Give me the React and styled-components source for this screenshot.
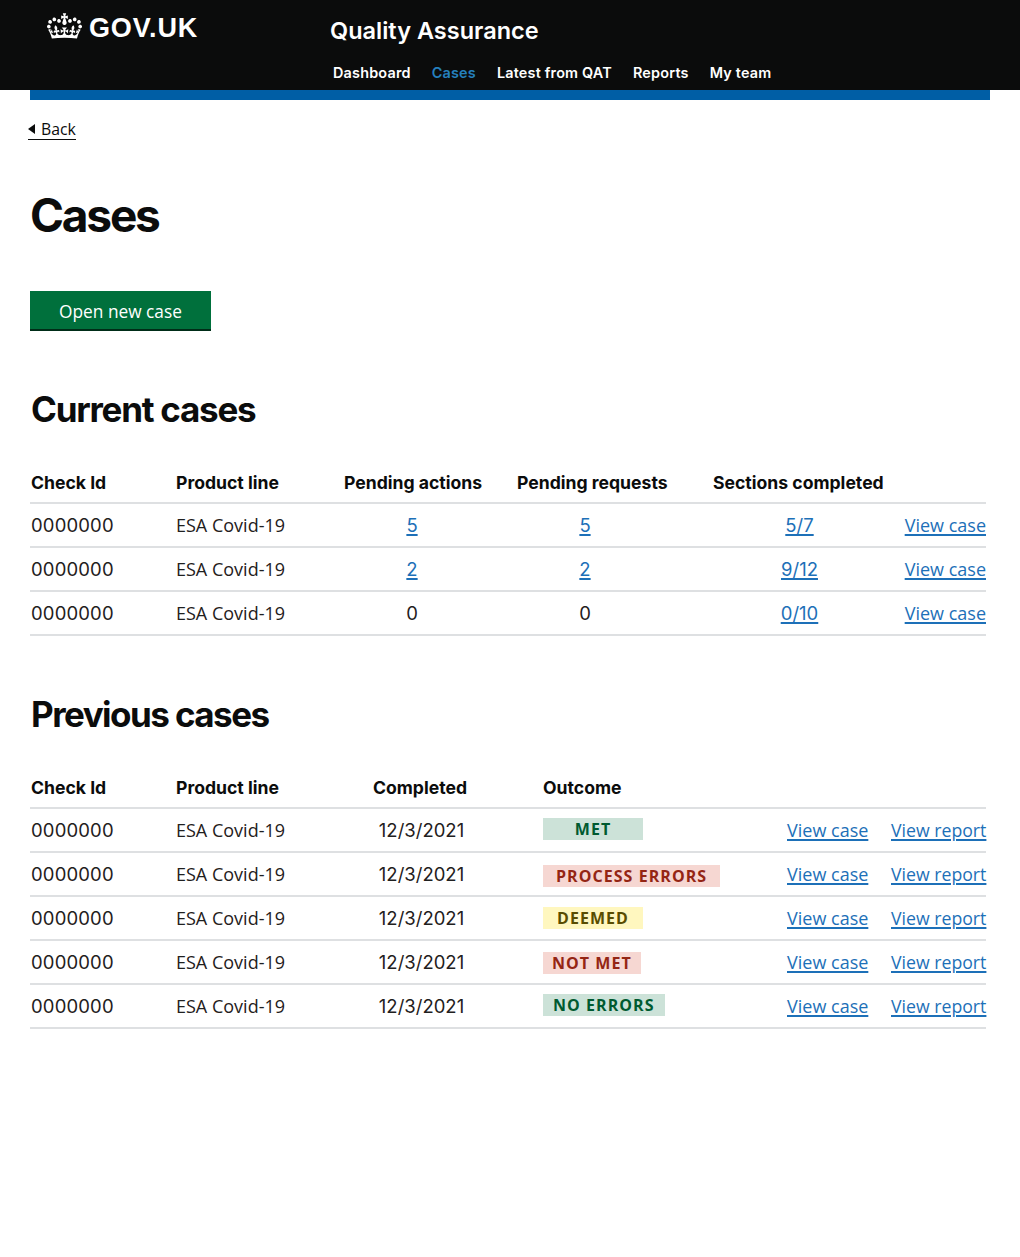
import React from "react";
import styled, { createGlobalStyle } from "styled-components";

const Global = createGlobalStyle`
  html, body { margin: 0; padding: 0; background: #fff; }
  body { font-family: Inter, "Noto Sans", sans-serif; color: #0b0c0c; }
  * { box-sizing: border-box; }
`;
const Page = styled.div`
  width: 1020px;
  min-height: 1257px;
  display: flex;
  flex-direction: column;
`;
const Header = styled.header`
  height: 90px;
  background: #0b0c0c;
  display: flex;
  padding-left: 47px;
`;
const LogoLink = styled.a`
  width: 283px;
  height: 40px;
  margin-top: 13px;
  display: flex;
  align-items: flex-start;
  gap: 7px;
  color: #fff;
`;
const LogoText = styled.span`
  font: 700 27px/30px "Liberation Sans", Arial, sans-serif;
  letter-spacing: 0.85px;
`;
const ServiceBlock = styled.div`
  display: flex;
  flex-direction: column;
`;
const ServiceName = styled.div`
  color: #fff;
  font-weight: 600;
  font-size: 23.5px;
  line-height: 30px;
  margin-top: 16px;
`;
const Nav = styled.nav`
  display: flex;
  gap: 21px;
  margin-top: 16px;
  padding-left: 3px;
`;
const NavLink = styled.a`
  color: ${(p) => (p.$active ? "#2580bd" : "#fff")};
  font-weight: 600;
  font-size: 14.4px;
  letter-spacing: 0.2px;
  line-height: 22px;
  white-space: nowrap;
`;
const BlueBar = styled.div`
  height: 10px;
  margin: 0 30px;
  background: #005ea5;
`;
const Main = styled.main`
  padding: 0 30px;
`;
const BackLink = styled.a`
  display: inline-flex;
  align-items: center;
  gap: 6px;
  margin: 19px 0 0 -2px;
  height: 21px;
  padding-bottom: 1px;
  font: 400 15.8px/20px "Open Sans", sans-serif;
  color: #0b0c0c;
  border-bottom: 1px solid #0b0c0c;
`;
const Caret = styled.span`
  width: 0;
  height: 0;
  border-style: solid;
  border-width: 5px 7px 5px 0;
  border-color: transparent #0b0c0c transparent transparent;
`;
const Title = styled.h1`
  margin: 48px 0 0;
  font-size: 46px;
  line-height: 54px;
  font-weight: 700;
  letter-spacing: -2.2px;
`;
const GreenButton = styled.button`
  display: block;
  margin-top: 49px;
  width: 181px;
  height: 40px;
  border: 0;
  border-radius: 0;
  padding: 2px 0 0;
  background: #00703c;
  box-shadow: inset 0 -2px 0 #002d18;
  color: #fff;
  font: 400 17.3px/24px "Open Sans", sans-serif;
`;
const SectionTitle = styled.h2`
  margin: 57px 0 0;
  font-size: 35px;
  line-height: 42px;
  font-weight: 700;
  letter-spacing: ${(p) => p.$ls}px;
  padding-left: 1px;
`;
const Table = styled.table`
  width: 956px;
  margin-top: 33px;
  border-collapse: collapse;
  table-layout: fixed;
`;
const Col = styled.col`
  width: ${(p) => p.$w}px;
`;
const Th = styled.th`
  height: 40px;
  padding: 0;
  padding-left: ${(p) => (p.$first ? 1 : 0)}px;
  text-align: left;
  font-size: 17.6px;
  font-weight: 700;
  white-space: nowrap;
  border-bottom: 2px solid #dee0e2;
  vertical-align: middle;
`;
const Td = styled.td`
  height: 44px;
  padding: 0 ${(p) => p.$pr || 0}px 0 0;
  font-size: 18.5px;
  font-weight: 400;
  color: #1f2020;
  border-bottom: 2px solid #dee0e2;
  text-align: ${(p) => p.$align || "left"};
  vertical-align: middle;
  white-space: nowrap;
`;
const IdCell = styled(Td)`
  padding-left: 1px;
  letter-spacing: 0.15px;
`;
const ProductCell = styled(Td)`
  font-family: "Open Sans", sans-serif;
  font-size: 18px;
`;
const Link = styled.a`
  color: #1d70b8;
  text-decoration: underline;
  text-decoration-thickness: 2px;
  text-underline-offset: 2px;
`;
const ViewLink = styled(Link)`
  font-family: "Open Sans", sans-serif;
  font-size: ${(p) => p.$size || 18}px;
  vertical-align: 1px;
`;
const Tag = styled.span`
  display: inline-block;
  min-width: ${(p) => p.$min || 0}px;
  height: 22px;
  padding: 0 ${(p) => p.$px}px;
  text-align: center;
  font: 700 16px/22px "Open Sans", "Noto Sans", sans-serif;
  letter-spacing: 1.05px;
  background: ${(p) => p.$bg};
  color: ${(p) => p.$fg};
  position: relative;
  top: ${(p) => p.$dy || 0}px;
`;

const tones = {
  green: { bg: "#cce2d8", fg: "#005a30" },
  red: { bg: "#f6d7d2", fg: "#942514" },
  yellow: { bg: "#fff7bf", fg: "#594d00" },
};

const current = [
  ["5", "5", "5/7"],
  ["2", "2", "9/12"],
  ["0", "0", "0/10"],
];
const previous = [
  { label: "MET", tone: "green", min: 100, px: 8, dy: -2 },
  { label: "PROCESS ERRORS", tone: "red", px: 13, dy: 1 },
  { label: "DEEMED", tone: "yellow", min: 100, px: 8, dy: -1 },
  { label: "NOT MET", tone: "red", px: 9, dy: 0 },
  { label: "NO ERRORS", tone: "green", px: 10, dy: -2 },
];

const Count = ({ v }) => (v === "0" ? v : <Link>{v}</Link>);

function Crown() {
  return (
    <svg width="35" height="26" viewBox="0 0 132 97" fill="#fff" aria-hidden="true">
      <path d="M25 30.2c3.5 1.5 7.7-.2 9.1-3.7 1.5-3.6-.2-7.8-3.9-9.2-3.6-1.4-7.6.3-9.1 3.9-1.4 3.5.3 7.5 3.9 9zM9 39.5c3.6 1.5 7.8-.2 9.2-3.7 1.5-3.6-.2-7.8-3.9-9.1-3.6-1.5-7.6.2-9.1 3.8-1.4 3.5.3 7.5 3.8 9zM4.4 57.2c3.5 1.5 7.7-.2 9.1-3.8 1.5-3.6-.2-7.7-3.9-9.1-3.5-1.5-7.6.3-9.1 3.8-1.4 3.5.3 7.6 3.9 9.1zm38.3-21.4c3.5 1.5 7.7-.2 9.1-3.8 1.5-3.6-.2-7.7-3.9-9.1-3.6-1.5-7.6.3-9.1 3.8-1.3 3.6.4 7.7 3.9 9.1zm64.4-5.6c-3.6 1.5-7.8-.2-9.1-3.7-1.5-3.6.2-7.8 3.8-9.2 3.6-1.4 7.7.3 9.2 3.9 1.3 3.5-.4 7.5-3.9 9zm15.9 9.3c-3.6 1.5-7.7-.2-9.1-3.7-1.5-3.6.2-7.8 3.7-9.1 3.6-1.5 7.7.2 9.2 3.8 1.5 3.5-.3 7.5-3.8 9zm4.7 17.7c-3.6 1.5-7.8-.2-9.2-3.8-1.5-3.6.2-7.7 3.9-9.1 3.6-1.5 7.7.3 9.2 3.8 1.3 3.5-.4 7.6-3.9 9.1zM89.3 35.8c-3.6 1.5-7.8-.2-9.2-3.8-1.4-3.6.2-7.7 3.9-9.1 3.6-1.5 7.7.3 9.2 3.8 1.4 3.6-.3 7.7-3.9 9.1zM69.7 17.7l8.9 4.7V9.3l-8.9 2.8c-.2-.3-.5-.6-.9-.9L72.4 0H59.6l3.5 11.2c-.3.3-.6.5-.9.9l-8.8-2.8v13.1l8.8-4.7c.3.3.6.7.9.9l-5 15.4v.1c-.2.8-.4 1.6-.4 2.4 0 4.1 3.1 7.5 7 8.1h.2c.3 0 .7.1 1 .1.4 0 .7 0 1-.1h.2c4-.6 7.1-4.1 7.1-8.1 0-.8-.1-1.7-.4-2.4V34l-5.1-15.4c.4-.2.7-.6 1-.9zM66 92.8c16.9 0 32.8 1.1 47.1 3.2 4-16.9 8.9-26.7 14-33.5l-9.6-3.4c1 4.9 1.1 7.2 0 10.2-1.5-1.4-3-4.3-4.2-8.7L108.6 76c2.8-2 5-3.2 7.5-3.3-4.4 9.4-10 11.9-13.6 11.2-4.3-.8-6.3-4.6-5.6-7.9 1-4.7 5.7-5.9 8-.5 4.3-8.7-3-11.4-7.6-8.8 7.1-7.2 7.9-13.5 2.1-21.1-8 6.1-8.1 12.3-4.5 20.8-4.7-5.4-12.1-2.5-9.5 6.2 3.4-5.2 7.9-2 7.2 3.1-.6 4.3-6.4 7.8-13.5 7.2-10.3-.9-10.9-8-11.2-13.8 2.5-.5 7.1 1.8 11 7.3L80.2 60c-4.1 4.4-8 5.3-12.3 5.4 1.4-4.4 8-11.6 8-11.6H55.5s6.4 7.2 7.9 11.6c-4.2-.1-8-1-12.3-5.4l1.4 16.4c3.9-5.5 8.5-7.7 10.9-7.3-.3 5.8-.9 12.8-11.1 13.8-7.2.6-12.9-2.9-13.5-7.2-.7-5 3.8-8.3 7.1-3.1 2.7-8.7-4.6-11.6-9.4-6.2 3.7-8.5 3.6-14.7-4.6-20.8-5.8 7.6-5 13.9 2.2 21.1-4.7-2.6-11.9.1-7.7 8.8 2.3-5.5 7.1-4.2 8.1.5.7 3.3-1.3 7.1-5.7 7.9-3.5.7-9-1.8-13.5-11.2 2.5.1 4.7 1.3 7.5 3.3l-4.7-15.4c-1.2 4.4-2.7 7.2-4.3 8.7-1.1-3-.9-5.3 0-10.2l-9.5 3.4c5 6.9 9.9 16.7 14 33.5 14.8-2.1 30.8-3.2 47.7-3.2z" />
    </svg>
  );
}

export default function App() {
  return (
    <Page>
      <Global />
      <Header>
        <LogoLink>
          <Crown />
          <LogoText>GOV.UK</LogoText>
        </LogoLink>
        <ServiceBlock>
          <ServiceName>Quality Assurance</ServiceName>
          <Nav>
            <NavLink>Dashboard</NavLink>
            <NavLink $active>Cases</NavLink>
            <NavLink>Latest from QAT</NavLink>
            <NavLink>Reports</NavLink>
            <NavLink>My team</NavLink>
          </Nav>
        </ServiceBlock>
      </Header>
      <BlueBar />
      <Main>
        <BackLink>
          <Caret />
          Back
        </BackLink>
        <Title>Cases</Title>
        <GreenButton>Open new case</GreenButton>
        <SectionTitle $ls={-1.25}>Current cases</SectionTitle>
        <Table>
          <colgroup>
            <Col $w={146} /><Col $w={168} /><Col $w={173} /><Col $w={196} /><Col $w={180} /><Col $w={93} />
          </colgroup>
          <thead>
            <tr>
              <Th $first>Check Id</Th><Th>Product line</Th><Th>Pending actions</Th><Th>Pending requests</Th><Th>Sections completed</Th><Th />
            </tr>
          </thead>
          <tbody>
            {current.map(([a, r, s], i) => (
              <tr key={i}>
                <IdCell>0000000</IdCell>
                <ProductCell>ESA Covid-19</ProductCell>
                <Td $align="center" $pr={37}><Count v={a} /></Td>
                <Td $align="center" $pr={60}><Count v={r} /></Td>
                <Td $align="center" $pr={7}><Link>{s}</Link></Td>
                <Td $align="right"><ViewLink>View case</ViewLink></Td>
              </tr>
            ))}
          </tbody>
        </Table>
        <SectionTitle $ls={-1.55}>Previous cases</SectionTitle>
        <Table>
          <colgroup>
            <Col $w={146} /><Col $w={197} /><Col $w={170} /><Col $w={244} /><Col $w={104} /><Col $w={95} />
          </colgroup>
          <thead>
            <tr>
              <Th $first>Check Id</Th><Th>Product line</Th><Th>Completed</Th><Th>Outcome</Th><Th /><Th />
            </tr>
          </thead>
          <tbody>
            {previous.map((t) => (
              <tr key={t.label}>
                <IdCell>0000000</IdCell>
                <ProductCell>ESA Covid-19</ProductCell>
                <Td $align="center" $pr={73}>12/3/2021</Td>
                <Td>
                  <Tag $bg={tones[t.tone].bg} $fg={tones[t.tone].fg} $min={t.min} $px={t.px} $dy={t.dy}>{t.label}</Tag>
                </Td>
                <Td><ViewLink>View case</ViewLink></Td>
                <Td $align="right"><ViewLink $size={17.7}>View report</ViewLink></Td>
              </tr>
            ))}
          </tbody>
        </Table>
      </Main>
    </Page>
  );
}
